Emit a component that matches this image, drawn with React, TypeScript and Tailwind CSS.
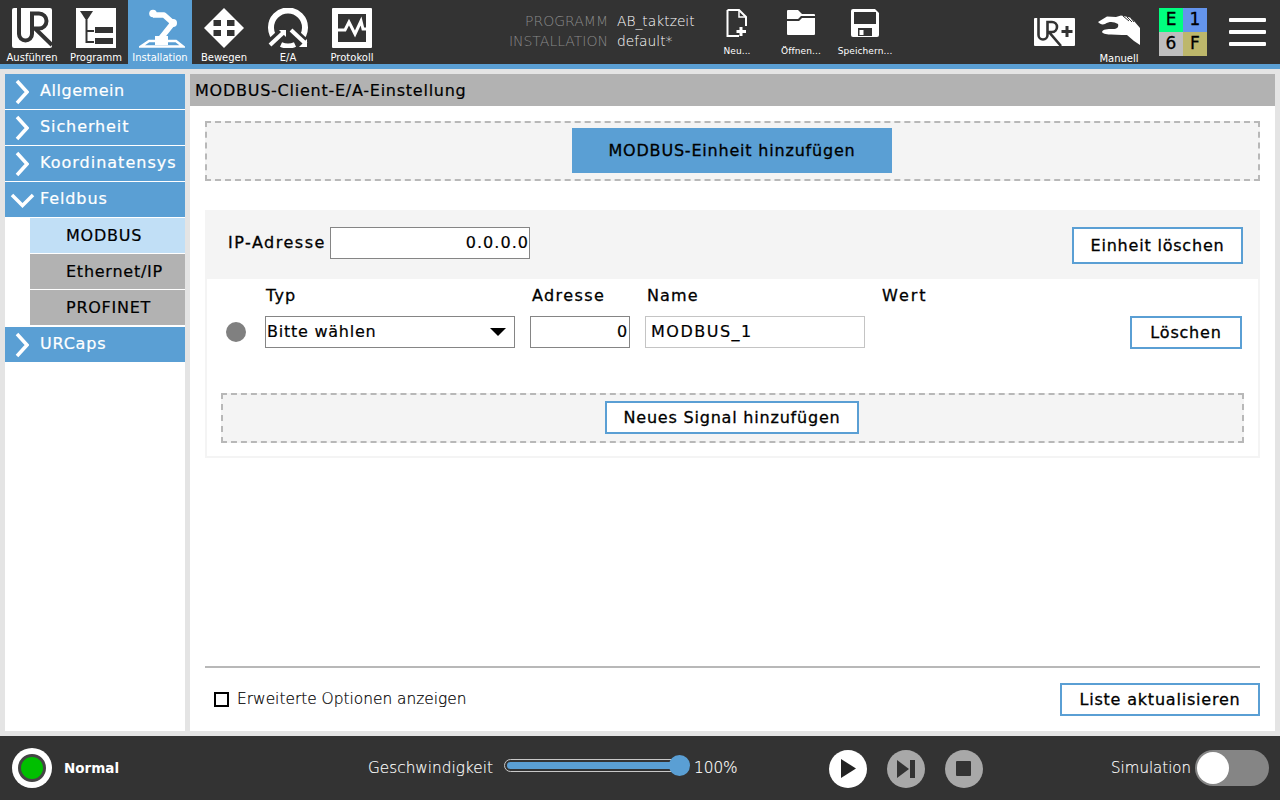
const dejavu = "font-['DejaVu_Sans',sans-serif]";
const bodyText = "text-[16px] tracking-[0.75px] [-webkit-text-stroke:0.2px]";

function UrLogo() {
  return (
    <svg width="40" height="40" viewBox="0 0 40 40">
      <rect width="40" height="40" rx="2" fill="#fff" />
      <path d="M7 0V26a6.5 6.5 0 0 0 13 0V5.5H27a7.5 7.5 0 0 1 0 15H23L40 37" fill="none" stroke="#333" strokeWidth="4" />
    </svg>
  );
}

function ProgramIcon() {
  return (
    <svg width="40" height="40" viewBox="0 0 40 40">
      <rect width="40" height="40" fill="#fff" />
      <path d="M4 3H17L10.5 13Z" fill="#333" />
      <path d="M10.5 12V34H18M10.5 23H18" fill="none" stroke="#333" strokeWidth="2" />
      <rect x="19" y="19" width="18" height="6" fill="#333" />
      <rect x="19" y="30" width="18" height="6" fill="#333" />
    </svg>
  );
}

function RobotIcon() {
  return (
    <svg width="46" height="41" viewBox="0 0 46 41" className="ml-[3px]">
      <path d="M10 33L2 38.5H44L37 33H10Z" fill="none" stroke="#fff" strokeWidth="2.5" />
      <rect x="16" y="28" width="13" height="9" fill="#fff" />
      <path d="M22 30L34 15L25 7H14" fill="none" stroke="#fff" strokeWidth="5.5" strokeLinejoin="round" />
      <circle cx="14" cy="5.5" r="3.8" fill="#fff" />
      <circle cx="34" cy="15" r="4" fill="#fff" />
    </svg>
  );
}

function MoveIcon() {
  return (
    <svg width="40" height="40" viewBox="0 0 40 40">
      <path d="M20 0L40 20L20 40L0 20Z" fill="#fff" />
      <rect x="9.5" y="12" width="7.5" height="6" fill="#333" />
      <rect x="23" y="12" width="7.5" height="6" fill="#333" />
      <rect x="9.5" y="22" width="7.5" height="6" fill="#333" />
      <rect x="23" y="22" width="7.5" height="6" fill="#333" />
    </svg>
  );
}

function IoIcon() {
  return (
    <svg width="40" height="40" viewBox="0 0 40 40">
      <path d="M8.5 32A17 17 0 1 1 31.5 32" fill="none" stroke="#fff" strokeWidth="6" />
      <path d="M13 36.5A17 17 0 0 0 27 36.5" fill="none" stroke="#fff" strokeWidth="5" />
      <path d="M1 36L17 21" stroke="#333" strokeWidth="8" />
      <path d="M39 36L23 21" stroke="#333" strokeWidth="8" />
      <path d="M2 37L16 24" stroke="#fff" strokeWidth="4" />
      <path d="M11 22H18V29Z" fill="#fff" />
      <path d="M23 22L38 36" stroke="#fff" strokeWidth="4" />
      <path d="M39 39H31L39 31Z" fill="#fff" />
    </svg>
  );
}

function LogIcon() {
  return (
    <svg width="40" height="40" viewBox="0 0 40 40">
      <rect width="40" height="40" rx="1" fill="#fff" />
      <rect x="6" y="6" width="28" height="28" fill="#333" />
      <path d="M6 22H13L17 14L23 26L29 13L31 21H34" fill="none" stroke="#fff" strokeWidth="3" />
    </svg>
  );
}

function NewIcon() {
  return (
    <svg width="22" height="28" viewBox="0 0 22 28">
      <path d="M1.5 1H13L20 8V17M1.5 1V27H13" fill="none" stroke="#fff" strokeWidth="2" />
      <path d="M13 1V8H20" fill="none" stroke="#fff" strokeWidth="1.5" />
      <path d="M15 18V27M10.5 22.5H20" stroke="#fff" strokeWidth="3" />
    </svg>
  );
}

function FolderIcon() {
  return (
    <svg width="28" height="26" viewBox="0 0 28 26">
      <path d="M0 2a1 1 0 0 1 1-1H11L15 5H27a1 1 0 0 1 1 1V7H14L11 10H0Z" fill="#fff" />
      <path d="M0 12H12L15 9H28V25a1 1 0 0 1-1 1H1a1 1 0 0 1-1-1Z" fill="#fff" />
    </svg>
  );
}

function SaveIcon() {
  return (
    <svg width="28" height="28" viewBox="0 0 28 28">
      <path d="M2 0H24L28 4V26a2 2 0 0 1-2 2H2a2 2 0 0 1-2-2V2a2 2 0 0 1 2-2Z" fill="#fff" />
      <rect x="3" y="3" width="22" height="12" fill="#333" />
      <rect x="7" y="19" width="14" height="8" fill="#333" />
      <rect x="8.5" y="21" width="4" height="5" fill="#fff" />
    </svg>
  );
}

function UrPlus() {
  return (
    <svg width="41" height="28" viewBox="0 0 41 28">
      <rect width="41" height="28" rx="1" fill="#fff" />
      <path d="M4.5 0V17a4.5 4.5 0 0 0 9 0V4H18a5 5 0 0 1 0 10H15L27 28" fill="none" stroke="#333" strokeWidth="2.6" />
      <path d="M33 8V19M27.5 13.5H38.5" stroke="#333" strokeWidth="3" />
    </svg>
  );
}

function HandIcon() {
  return (
    <svg width="43" height="30" viewBox="0 0 43 30">
      <path d="M0 7L9 1.5L18 2L23 0.5L32 2.5L36 6L42 13V30L36 26L29 20L24 20L13 19.5C10 19.5 5 19 4 17C5 14 9 14 15 14C19 14 21 12 20 9C16 7 12 6 7 9C4 10 2 9 0 7Z" fill="#fff" />
      <path d="M25 1L31 6M29 2L34 7M33 3L36 7" stroke="#333" strokeWidth="1" />
    </svg>
  );
}

function NavTile({ label, icon, active }: { label: string; icon: React.ReactNode; active?: boolean }) {
  return (
    <div className={`w-16 h-16 flex flex-col items-center pt-2 ${active ? "bg-[#5a9fd4]" : ""}`}>
      <div className="h-[42px] flex items-start">{icon}</div>
      <span className="text-[10px] leading-[12px] mt-[3px] text-white">{label}</span>
    </div>
  );
}

function FileTile({ label, icon }: { label: string; icon: React.ReactNode }) {
  return (
    <div className="w-16 h-16 flex flex-col items-center pt-[9px]">
      <div className="h-[32px] flex items-start">{icon}</div>
      <span className="text-[9px] leading-[12px] mt-[4px] text-white tracking-[0.1px]">{label}</span>
    </div>
  );
}

function SideItem({ label, open, tracking, className }: { label: string; open?: boolean; tracking: string; className?: string }) {
  return (
    <div className={`h-[35px] bg-[#5a9fd4] flex items-center text-white text-[16px] [-webkit-text-stroke:0.2px] ${className ?? ""}`}>
      <div className="w-[35px] flex justify-center shrink-0">
        {open ? (
          <svg width="25" height="15" viewBox="0 0 25 15" className="mt-[1px]">
            <path d="M2 2L12.5 12.5L23 2" fill="none" stroke="#fff" strokeWidth="3.5" />
          </svg>
        ) : (
          <svg width="14" height="26" viewBox="0 0 14 26" className="ml-[-1px]">
            <path d="M2 2L12 13L2 24" fill="none" stroke="#fff" strokeWidth="3.5" />
          </svg>
        )}
      </div>
      <span className={`mb-[2px] ${tracking}`}>{label}</span>
    </div>
  );
}

function SubItem({ label, selected }: { label: string; selected?: boolean }) {
  return (
    <div className={`ml-[25px] h-[35px] flex items-center pl-[36px] text-black ${bodyText} ${selected ? "bg-[#c1dff6]" : "bg-[#b2b2b2]"}`}>
      {label}
    </div>
  );
}

function OutlineButton({ label, className }: { label: string; className?: string }) {
  return (
    <div className={`border-2 border-[#5a9fd4] bg-white flex items-center justify-center text-[16px] tracking-[0.8px] [-webkit-text-stroke:0.3px] text-black ${className ?? ""}`}>
      {label}
    </div>
  );
}

function FieldLabel({ label, className }: { label: string; className?: string }) {
  return <span className={`text-[16px] [-webkit-text-stroke:0.3px] text-black ${className ?? ""}`}>{label}</span>;
}

export default function App() {
  return (
    <div className={`w-[1280px] h-[800px] overflow-hidden flex flex-col bg-[#e4e4e4] ${dejavu}`}>
      {/* Top bar */}
      <header className="h-[69px] shrink-0 bg-[#333333] border-b-[5px] border-[#5a9fd4] flex items-start">
        <NavTile label="Ausführen" icon={<UrLogo />} />
        <NavTile label="Programm" icon={<ProgramIcon />} />
        <NavTile label="Installation" icon={<RobotIcon />} active />
        <NavTile label="Bewegen" icon={<MoveIcon />} />
        <NavTile label="E/A" icon={<IoIcon />} />
        <NavTile label="Protokoll" icon={<LogIcon />} />

        <div className="w-[224px] mt-[11px] flex flex-col items-end text-[14px] leading-[20px] text-[#8a8a8a] font-extralight">
          <span>PROGRAMM</span>
          <span>INSTALLATION</span>
        </div>
        <div className="w-[88px] ml-[9px] mt-[11px] flex flex-col text-[13.8px] leading-[20px] text-white font-extralight">
          <span>AB_taktzeit</span>
          <span>default*</span>
        </div>

        <FileTile label="Neu..." icon={<NewIcon />} />
        <FileTile label="Öffnen..." icon={<FolderIcon />} />
        <FileTile label="Speichern..." icon={<SaveIcon />} />

        <div className="ml-[132px] w-[50px] mt-[18px] flex justify-center"><UrPlus /></div>
        <div className="ml-[10px] w-[60px] flex flex-col items-center pt-[15px]">
          <HandIcon />
          <span className="text-[10px] leading-[12px] mt-[8px] text-white">Manuell</span>
        </div>
        <div className="ml-[10px] mt-[8px] grid grid-cols-2 grid-rows-2 w-[48px] h-[48px] text-[17px] [-webkit-text-stroke:0.3px] text-black">
          <div className="bg-[#00ff7f] flex items-center justify-center">E</div>
          <div className="bg-[#6495ed] flex items-center justify-center">1</div>
          <div className="bg-[#bebebe] flex items-center justify-center">6</div>
          <div className="bg-[#bdb76b] flex items-center justify-center">F</div>
        </div>
        <div className="ml-[22px] mt-[18px] w-[37px] flex flex-col gap-[8px]">
          <div className="h-[4px] bg-white rounded-[1px]" />
          <div className="h-[4px] bg-white rounded-[1px]" />
          <div className="h-[4px] bg-white rounded-[1px]" />
        </div>
      </header>

      {/* Middle */}
      <div className="flex-1 flex gap-[5px] px-[5px] py-[5px] min-h-0">
        <aside className="w-[180px] bg-white flex flex-col gap-px">
          <SideItem label="Allgemein" tracking="tracking-[0.55px]" />
          <SideItem label="Sicherheit" tracking="tracking-[0.9px]" />
          <SideItem label="Koordinatensys" tracking="tracking-[1px]" />
          <SideItem label="Feldbus" tracking="tracking-[0.9px]" open />
          <SubItem label="MODBUS" selected />
          <SubItem label="Ethernet/IP" />
          <SubItem label="PROFINET" />
          <SideItem label="URCaps" tracking="tracking-[0.8px]" className="mt-px" />
        </aside>

        <main className="flex-1 bg-white flex flex-col">
          <div className={`h-[32px] shrink-0 bg-[#b2b2b2] flex items-center pl-[5px] pt-[2px] text-black ${bodyText}`}>
            MODBUS-Client-E/A-Einstellung
          </div>

          <div className="flex-1 flex flex-col px-[15px]">
            <div className="mt-[15px] h-[60px] bg-[#f4f4f4] border-2 border-dashed border-[#b8b8b8] flex items-start justify-center pt-[5px]">
              <div className="mr-px w-[320px] h-[45px] bg-[#5a9fd4] flex items-center justify-center text-[16px] tracking-[0.8px] [-webkit-text-stroke:0.3px] text-black">
                MODBUS-Einheit hinzufügen
              </div>
            </div>

            <section className="mt-[29px] h-[248px] border-2 border-t-0 border-[#f4f4f4] flex flex-col">
              <div className="h-[69px] shrink-0 bg-[#f4f4f4] flex items-start">
                <FieldLabel label="IP-Adresse" className="ml-[21px] mt-[21px] w-[97px] whitespace-nowrap tracking-[1.5px]" />
                <div className="ml-[5px] mt-[17px] w-[200px] h-[32px] bg-white border border-[#858585] flex items-center justify-end text-black text-[16px] tracking-[1.05px] [-webkit-text-stroke:0.2px]">
                  0.0.0.0
                </div>
                <OutlineButton label="Einheit löschen" className="ml-auto mr-[15px] mt-[17px] w-[171px] h-[37px]" />
              </div>

              <div className="flex items-end h-[29px] shrink-0">
                <FieldLabel label="Typ" className="ml-[59px] w-[266px] tracking-[1.1px]" />
                <FieldLabel label="Adresse" className="w-[115px] tracking-[1.4px]" />
                <FieldLabel label="Name" className="w-[235px] tracking-[1.1px]" />
                <FieldLabel label="Wert" className="tracking-[2px]" />
              </div>

              <div className="flex items-start h-[33px] mt-[8px] shrink-0">
                <div className="ml-[19px] mt-[6px] w-5 h-5 rounded-full bg-[#808080]" />
                <div className={`ml-[19px] w-[250px] h-[32px] bg-white border border-[#858585] flex items-center justify-between pl-px pr-[8px] text-black ${bodyText}`}>
                  Bitte wählen
                  <svg width="16" height="8" viewBox="0 0 16 8"><path d="M0 0H16L8 8Z" fill="#000" /></svg>
                </div>
                <div className={`ml-[15px] w-[100px] h-[32px] bg-white border border-[#858585] flex items-center justify-end pr-px text-black ${bodyText}`}>
                  0
                </div>
                <div className="ml-[15px] w-[220px] h-[32px] bg-white border border-[#c4c4c4] flex items-center pl-[5px] text-black text-[16px] tracking-[1.5px] [-webkit-text-stroke:0.2px]">
                  MODBUS_1
                </div>
                <OutlineButton label="Löschen" className="ml-auto mr-[16px] w-[112px] h-[33px]" />
              </div>

              <div className="mt-[44px] mx-[14px] h-[50px] bg-[#f4f4f4] border-2 border-dashed border-[#b8b8b8] flex items-start justify-center pt-[6px]">
                <OutlineButton label="Neues Signal hinzufügen" className="mr-px w-[254px] h-[33px]" />
              </div>
            </section>

            <div className="mt-auto h-[65px] shrink-0 border-t-2 border-[#b8b8b8] flex items-center justify-between pl-[9px]">
              <div className="flex items-center gap-[8px]">
                <div className="w-[15px] h-[15px] bg-white border-2 border-black" />
                <span className="pt-[1px] text-[15.4px] text-black font-extralight [-webkit-text-stroke:0.2px]">Erweiterte Optionen anzeigen</span>
              </div>
              <OutlineButton label="Liste aktualisieren" className="w-[200px] h-[33px]" />
            </div>
          </div>
        </main>
      </div>

      {/* Bottom bar */}
      <footer className="h-[64px] shrink-0 bg-[#333333] flex items-center">
        <div className="ml-[12px] w-10 h-10 rounded-full bg-white flex items-center justify-center">
          <div className="w-7 h-7 rounded-full bg-[#00bf00] border-[3px] border-[#444444]" />
        </div>
        <span className="ml-[12px] w-[100px] text-[13.5px] font-bold text-white">Normal</span>
        <span className="ml-[204px] text-[15.3px] text-white font-extralight [-webkit-text-stroke:0.15px]">Geschwindigkeit</span>

        <div className="relative ml-[11px] mb-[6px] w-[181px] h-[13px] rounded-full border border-[#c8c8c8] p-[2px]">
          <div className="h-full rounded-full bg-[#5a9fd4]" />
          <div className="absolute right-[-6px] top-[-5px] w-[21px] h-[21px] rounded-full bg-[#5a9fd4]" />
        </div>
        <span className="ml-[9px] text-[15.3px] text-white font-extralight [-webkit-text-stroke:0.15px]">100%</span>

        <div className="ml-[91px] mt-[1px] w-[38px] h-[38px] rounded-full bg-white flex items-center justify-center">
          <svg width="15" height="19" viewBox="0 0 15 19" className="ml-[2px]"><path d="M0 0L15 9.5L0 19Z" fill="#222" /></svg>
        </div>
        <div className="ml-[20px] mt-[1px] w-[38px] h-[38px] rounded-full bg-[#a8a8a8] flex items-center justify-center">
          <svg width="18" height="18" viewBox="0 0 18 18"><path d="M0 0L12 9L0 18Z" fill="#333" /><rect x="13" y="0" width="5" height="18" fill="#333" /></svg>
        </div>
        <div className="ml-[20px] mt-[1px] w-[38px] h-[38px] rounded-full bg-[#a8a8a8] flex items-center justify-center">
          <div className="w-[15px] h-[15px] bg-[#333333] rounded-[1px]" />
        </div>

        <span className="ml-auto text-[15px] text-white font-extralight [-webkit-text-stroke:0.15px]">Simulation</span>
        <div className="ml-[4px] mr-[11px] w-[74px] h-[36px] rounded-full bg-[#858585] flex items-center pl-[2px]">
          <div className="w-[32px] h-[32px] rounded-full bg-white" />
        </div>
      </footer>
    </div>
  );
}
